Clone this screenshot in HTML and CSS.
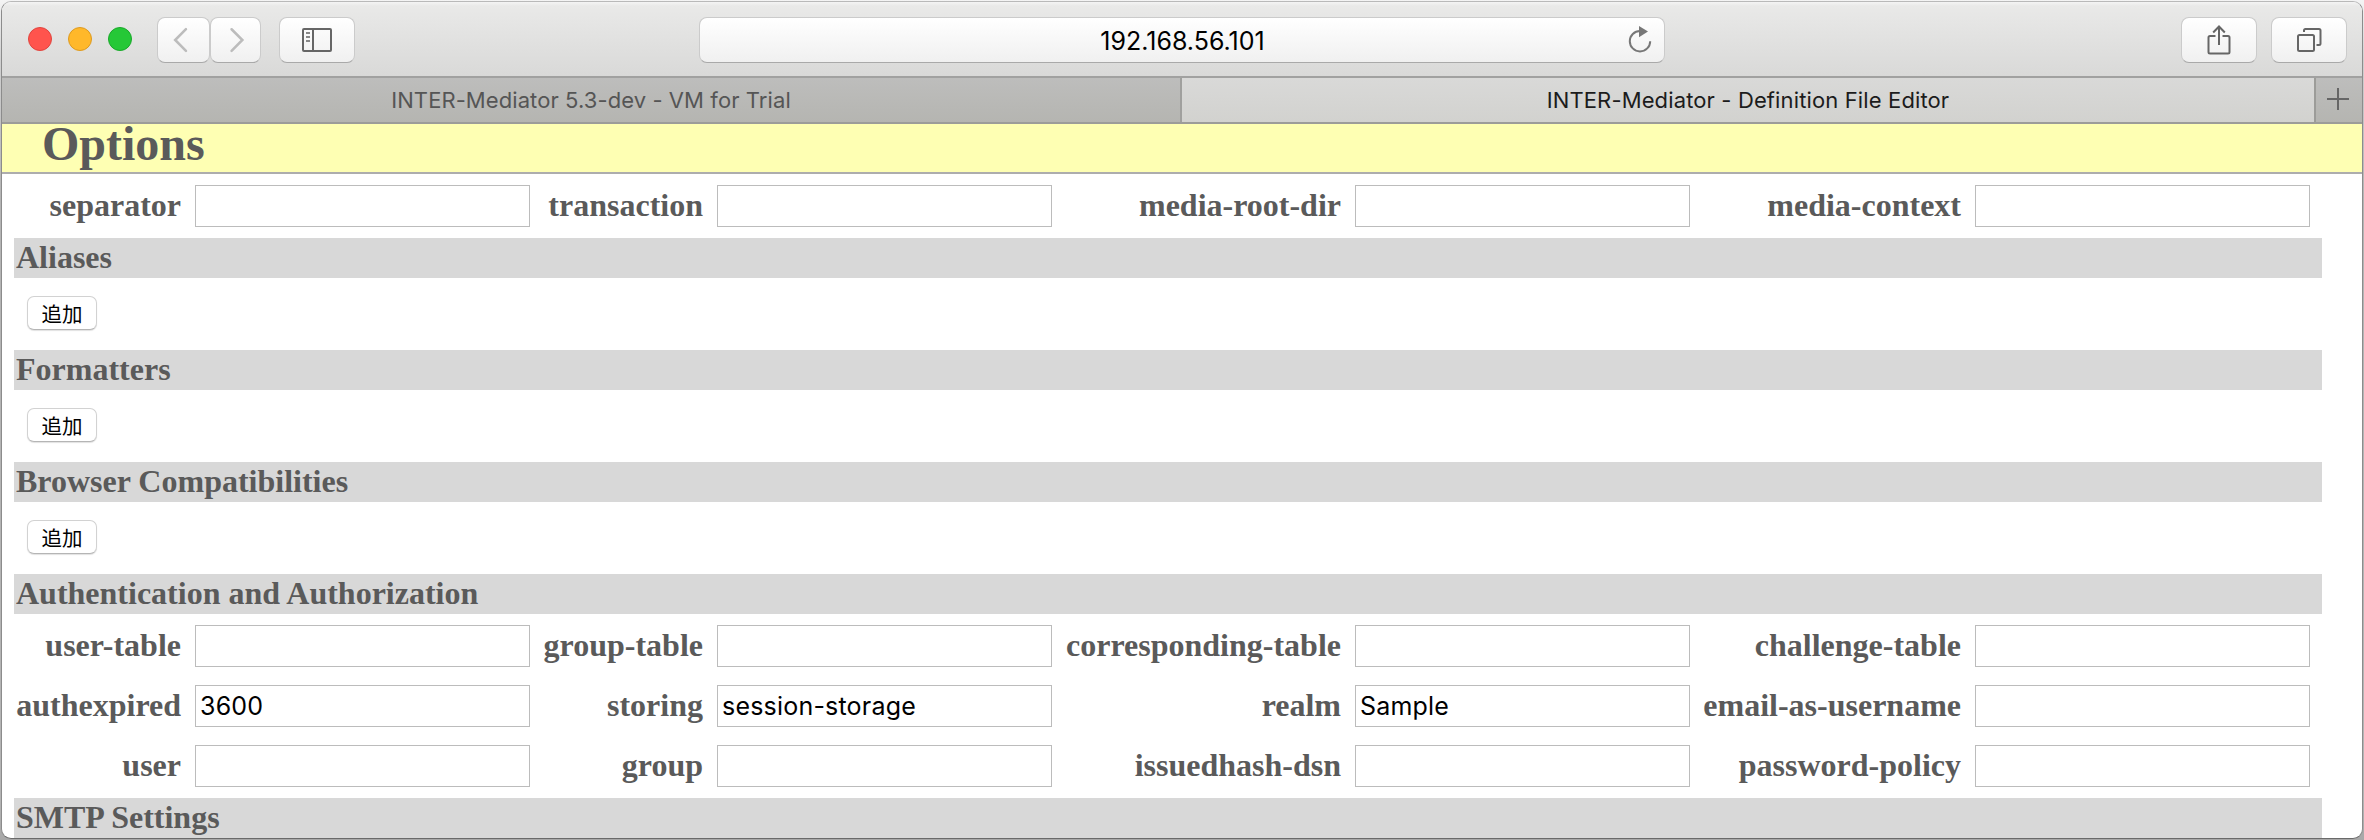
FILE: index.html
```html
<!DOCTYPE html>
<html lang="ja">
<head>
<meta charset="utf-8">
<title>INTER-Mediator - Definition File Editor</title>
<link rel="stylesheet" href="styles.css">
</head>
<body>
<div class="window">
  <header class="toolbar">
    <div class="lights"><i class="light red"></i><i class="light yellow"></i><i class="light green"></i></div>
    <div class="nav">
      <span class="tool back"><svg width="52" height="45" viewBox="0 0 52 45"><path d="M28.500 11 17.500 22l11 11" fill="none" stroke="#bcbcbc" stroke-width="2.600" stroke-linecap="round"/></svg></span>
      <span class="tool forward"><svg width="50" height="45" viewBox="0 0 50 45"><path d="M21 11 32 22 21 33" fill="none" stroke="#bcbcbc" stroke-width="2.600" stroke-linecap="round"/></svg></span>
    </div>
    <span class="tool sidebar"><svg width="30" height="24" viewBox="0 0 30 24"><rect x="1" y="1" width="28" height="22" rx="1" fill="none" stroke="#666" stroke-width="2"/><path d="M11 1v22" stroke="#666" stroke-width="2"/><path d="M4 5h4M4 9h4M4 13h4" stroke="#888" stroke-width="2"/></svg></span>
    <div class="address"><span class="url">192.168.56.101</span>
      <svg class="reload" width="24" height="28" viewBox="0 0 24 28"><path d="M12 5A10.200 10.200 0 1 0 22.200 15.200" fill="none" stroke="#777" stroke-width="2"/><path d="M11 0v11.200l9-5.600z" fill="#777"/></svg>
    </div>
    <span class="tool share"><svg width="24" height="30" viewBox="0 0 24 30"><g fill="none" stroke="#666" stroke-width="2"><path d="M8.500 11H3a1.500 1.500 0 0 0-1.500 1.500V27A1.500 1.500 0 0 0 3 28.500h18a1.500 1.500 0 0 0 1.500-1.500V12.500A1.500 1.500 0 0 0 21 11h-5.500"/><path d="M12 20V1.500M6.200 7.500 12 1.500l5.800 6"/></g></svg></span>
    <span class="tool tabs-btn"><svg width="26" height="26" viewBox="0 0 26 26"><g fill="none" stroke="#666" stroke-width="2"><rect x="2" y="8" width="16" height="16" rx="1.500"/><path d="M8 5V3.500A1.500 1.500 0 0 1 9.500 2H23a1.500 1.500 0 0 1 1.500 1.500V16.500A1.500 1.500 0 0 1 23 18h-2.500"/></g></svg></span>
  </header>
  <nav class="tabbar">
    <div class="tab inactive">INTER-Mediator 5.3-dev - VM for Trial</div>
    <div class="tab active">INTER-Mediator - Definition File Editor</div>
    <div class="newtab"><svg width="22" height="22" viewBox="0 0 22 22"><path d="M11 0v22M0 11h22" stroke="#666" stroke-width="2"/></svg></div>
  </nav>
  <h1 class="title">Options</h1>
  <main class="content">
    <div class="fields">
      <label>separator</label><div class="input"></div><label>transaction</label><div class="input"></div><label>media-root-dir</label><div class="input"></div><label>media-context</label><div class="input"></div>
    </div>
    <h2>Aliases</h2>
    <div class="actions"><button>追加</button></div>
    <h2>Formatters</h2>
    <div class="actions"><button>追加</button></div>
    <h2>Browser Compatibilities</h2>
    <div class="actions"><button>追加</button></div>
    <h2>Authentication and Authorization</h2>
    <div class="fields">
      <label>user-table</label><div class="input"></div><label>group-table</label><div class="input"></div><label>corresponding-table</label><div class="input"></div><label>challenge-table</label><div class="input"></div>
      <label>authexpired</label><div class="input">3600</div><label>storing</label><div class="input">session-storage</div><label>realm</label><div class="input">Sample</div><label>email-as-username</label><div class="input"></div>
      <label>user</label><div class="input"></div><label>group</label><div class="input"></div><label>issuedhash-dsn</label><div class="input"></div><label>password-policy</label><div class="input"></div>
    </div>
    <h2>SMTP Settings</h2>
  </main>
</div>
</body>
</html>
```
FILE: styles.css
```css
* { box-sizing: border-box; }
html { height: 840px; overflow: hidden; }
body {
  margin: 0;
  padding: 1px;
  height: 840px;
  overflow: hidden;
  background: linear-gradient(#f4f4f4, #d0d0d0 60px, #b4b4b4 200px, #b4b4b4 800px, #a8a8a8);
}
.window {
  height: 838px;
  border: 1px solid #8c8c8c;
  border-top-color: #b9b9b9;
  border-bottom-color: #6a6a6a;
  border-radius: 10px;
  overflow: hidden;
  background: #fff;
}
.toolbar {
  display: flex;
  height: 76px;
  padding-top: 15px;
  border-bottom: 2px solid #a1a1a0;
  background: linear-gradient(#f4f4f4, #e9e9e8 4px, #d9d9d8);
}
.toolbar { height: 76px; }
.lights { display: flex; gap: 16px; padding: 10px 0 0 26px; width: 155px; }
.light { width: 24px; height: 24px; border-radius: 50%; border: 1px solid; }
.red { background: #ff544d; border-color: #e0443e; }
.yellow { background: #ffb82a; border-color: #dd9a20; }
.green { background: #25c837; border-color: #19a92a; }
.nav { display: flex; width: 104px; margin-right: 18px; }
.tool {
  display: flex;
  align-items: center;
  justify-content: center;
  width: 76px;
  height: 46px;
  border: 1px solid #cbcbcb;
  border-bottom-color: #a9a9a9;
  border-radius: 8px;
  background: linear-gradient(#fff, #f0f0f0);
}
.back { width: 53px; }
.forward { width: 51px; }
.address {
  display: flex;
  width: 966px;
  height: 46px;
  margin-left: 344px;
  border: 1px solid #cbcbcb;
  border-bottom-color: #a9a9a9;
  border-radius: 8px;
  background: linear-gradient(#fff, #f0f0f0);
}
.url {
  flex: 1;
  padding-left: 41px;
  text-align: center;
  font: 25px/46px Inter, sans-serif;
}
.reload { margin: 8px 12px 0 4px; }
.share { margin-left: 516px; }
.tabs-btn { margin-left: 14px; }
.tabbar {
  display: flex;
  height: 46px;
  border-bottom: 2px solid #9c9c99;
  font: 22px/44px Inter, sans-serif;
  text-align: center;
}
.inactive { width: 1180px; border-right: 2px solid #a0a09e; background: linear-gradient(#bdbdbc, #b5b5b1); color: #555; letter-spacing: .08px; }
.active { width: 1132px; background: linear-gradient(#d9d9d8, #d2d2cf); color: #1c1c1c; letter-spacing: .13px; }
.newtab { flex: 1; display: flex; justify-content: center; padding: 10px 2px 0 0; border-left: 2px solid #9c9c99; background: linear-gradient(#bdbdbc, #b5b5b1); }
.title {
  height: 50px;
  margin: 0;
  padding-left: 40px;
  border-bottom: 2px solid #adadad;
  background: #feffb3;
  color: #5a5a5a;
  font: bold 48px/40px "Liberation Serif", serif;
}
.content { width: 2320px; padding-left: 12px; font: bold 32px/40px "Liberation Serif", serif; color: #5a5a5a; }
.fields {
  display: grid;
  grid-template-columns: 181px 335px 187px 335px 303px 335px 285px 335px;
  row-gap: 18px;
  padding: 11px 0;
}
label { padding-right: 14px; text-align: right; white-space: nowrap; }
.input { height: 42px; padding-left: 4px; border: 1px solid #bcbcbc; color: #000; font: 25px/41px Inter, sans-serif; letter-spacing: .2px; }
h2 { height: 40px; margin: 0; padding-left: 2px; background: #d8d8d8; font: inherit; line-height: 38px; }
.actions { height: 72px; padding: 18px 0 0 13px; }
button {
  display: block;
  width: 70px;
  height: 34px;
  padding: 0;
  border: 1px solid #d2d2d2;
  border-bottom-color: #b5b5b5;
  border-radius: 7px;
  box-shadow: 0 1px 1px rgba(0,0,0,.12);
  background: #fff;
  color: #000;
  font: 400 20.500px/30px "Noto Sans CJK JP", sans-serif;
}
```
